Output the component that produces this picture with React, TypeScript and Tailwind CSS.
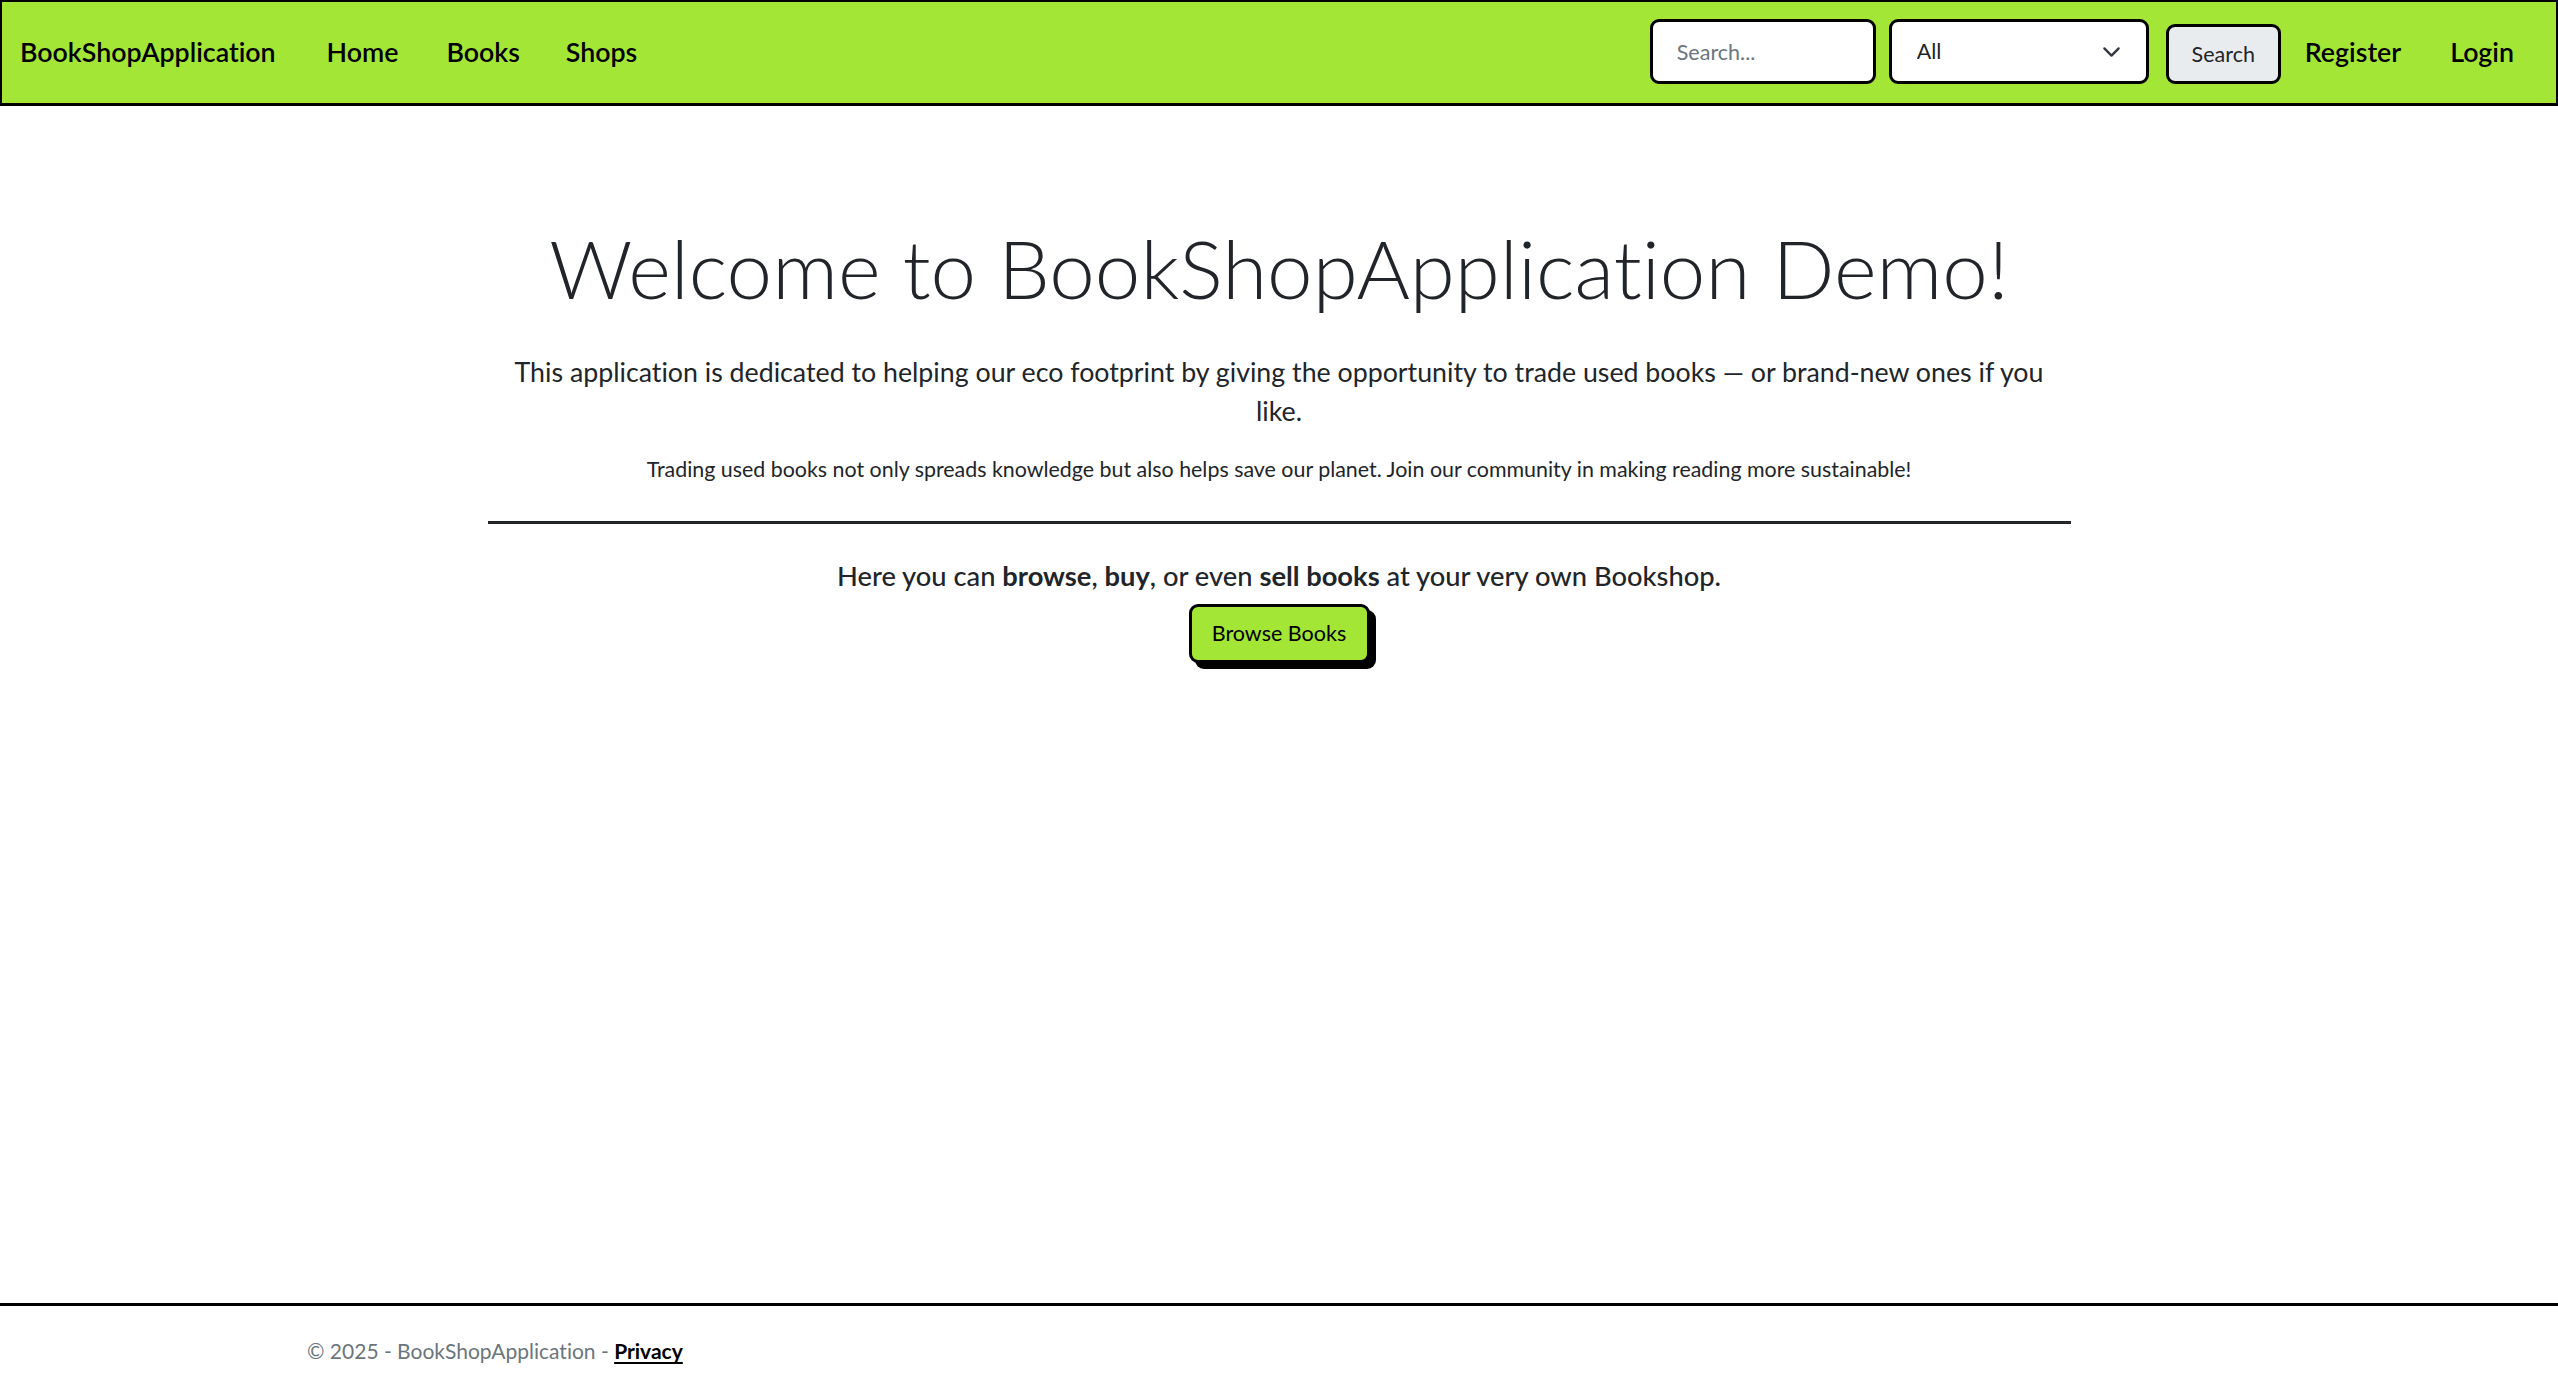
import React from 'react';

const font = "font-['Lato','Open_Sans',sans-serif] [font-variant-ligatures:none]";

const NavLink: React.FC<{ label: string; className?: string }> = ({ label, className = '' }) => (
  <a href="#" className={`text-[26.75px] font-semibold text-black leading-none ${className}`}>
    {label}
  </a>
);

const Chevron = () => (
  <svg
    viewBox="0 0 16 16"
    className="pointer-events-none absolute right-[28px] top-1/2 -translate-y-1/2 w-[19px] h-[19px]"
    fill="none"
    stroke="#343a40"
    strokeWidth="2"
    strokeLinecap="round"
    strokeLinejoin="round"
  >
    <path d="m2 5 6 6 6-6" />
  </svg>
);

export default function App() {
  return (
    <div className={`${font} h-screen flex flex-col bg-white text-[#212529]`}>
      {/* navbar */}
      <nav className="h-[106px] shrink-0 flex items-center justify-between bg-[#a3e635] border-x-2 border-t-2 border-b-[3px] border-black pl-[18px] pr-[42px]">
        <div className="flex items-center">
          <a href="#" className="text-[26.75px] font-semibold text-black leading-none">
            BookShopApplication
          </a>
          <NavLink label="Home" className="ml-[51px]" />
          <NavLink label="Books" className="ml-[48px]" />
          <NavLink label="Shops" className="ml-[46px]" />
        </div>
        <div className="flex items-center">
          <form className="flex items-end gap-[13px] mt-[-2px]" onSubmit={(e) => e.preventDefault()}>
            <input
              type="text"
              placeholder="Search..."
              className="w-[226px] h-[65px] rounded-[9px] border-[3px] border-black bg-white px-[24px] text-[21.5px] text-[#212529] placeholder:text-[#6c757d] outline-none"
            />
            <div className="relative">
              <select
                title="Category"
                className="appearance-none w-[260px] h-[65px] rounded-[9px] border-[3px] border-black bg-white pl-[25px] text-[21.5px] text-[#212529] outline-none"
              >
                <option>All</option>
                <option>Books</option>
                <option>Shops</option>
              </select>
              <Chevron />
            </div>
            <button
              type="submit"
              className="ml-[4px] w-[115px] h-[60px] rounded-[9px] border-[3px] border-black bg-[#e9ecef] text-[21.5px] text-[#212529]"
            >
              Search
            </button>
          </form>
          <div className="flex items-center gap-[49px] ml-[24px]">
            <NavLink label="Register" />
            <NavLink label="Login" />
          </div>
        </div>
      </nav>

      {/* main */}
      <main className="flex-1">
        <div className="w-[1583px] mx-auto pt-[112px] text-center">
          <h1 className="text-[81.7px] font-light leading-[1.2] mb-[37px]">
            Welcome to BookShopApplication Demo!
          </h1>
          <p className="w-[1560px] mx-auto text-[26.75px] leading-[39px]">
            This application is dedicated to helping our eco footprint by giving the opportunity to trade used books — or brand-new ones if you like.
          </p>
          <p className="mt-[23px] text-[21.4px] leading-[31.5px]">
            Trading used books not only spreads knowledge but also helps save our planet. Join our community in making reading more sustainable!
          </p>
          <hr className="mt-[35px] border-0 h-[3px] bg-[#212529]" />
          <p className="mt-[33px] text-[27.3px] leading-[37px] font-medium">
            Here you can <b className="font-bold">browse</b>, <b className="font-bold">buy</b>, or even{' '}
            <b className="font-bold">sell books</b> at your very own Bookshop.
          </p>
          <button
            type="button"
            className="mt-[10px] w-[181px] h-[59px] rounded-[9px] border-[3px] border-black bg-[#a3e635] text-[21.5px] text-black shadow-[6px_6px_0_#000]"
          >
            Browse Books
          </button>
        </div>
      </main>

      {/* footer */}
      <footer className="h-[89px] shrink-0 border-t-[3px] border-black">
        <div className="w-[1944px] mx-auto h-full pt-[4px] flex items-center whitespace-nowrap text-[21px] text-[#6c757d]">
          © 2025 - BookShopApplication -&nbsp;
          <a href="#" className="font-bold text-black underline underline-offset-[3px]">
            Privacy
          </a>
        </div>
      </footer>
    </div>
  );
}
